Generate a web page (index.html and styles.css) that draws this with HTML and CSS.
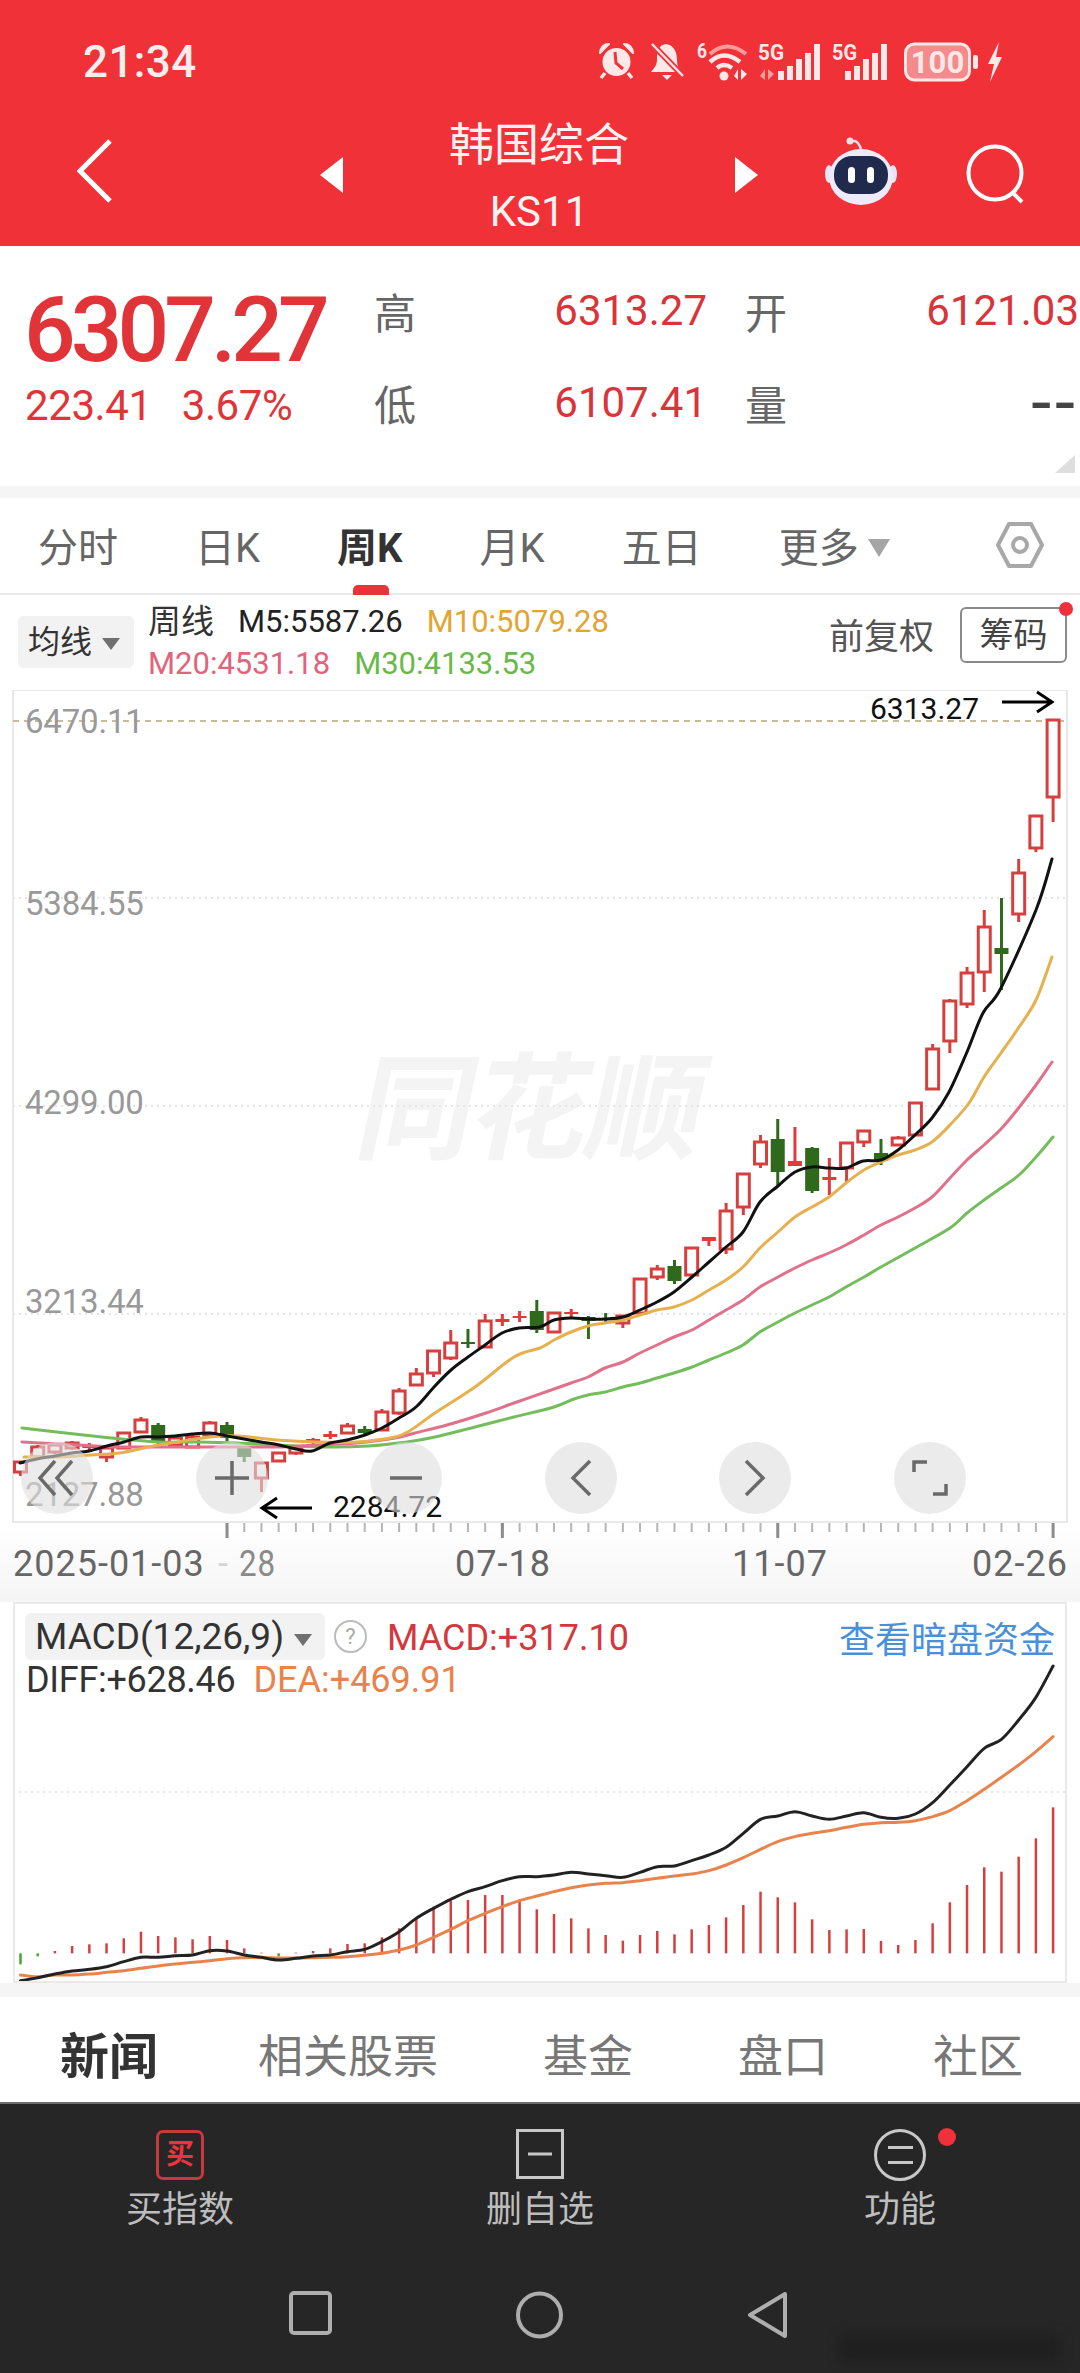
FILE: index.html
```html
<!DOCTYPE html>
<html lang="zh-CN">
<head>
    <meta charset="UTF-8">
    <meta name="viewport" content="width=device-width, initial-scale=1.0">
    <title>韩国综合 KS11</title>
    <link rel="stylesheet" href="styles.css">
</head>
<body>
<div class="top">
    <div class="status">
        <span class="time">21:34</span>
        <div class="status-icons">
            <svg class="ic-alarm" width="37" height="38" viewBox="0 0 37 38">
                <path d="M2 11 Q3 2 11 2 Z M35 11 Q34 2 26 2 Z" fill="#fde8e8" stroke="#fde8e8" stroke-width="2" stroke-linejoin="round"/>
                <circle cx="18.5" cy="20" r="14" fill="#fde8e8"/>
                <path d="M17 10 L18 21 L25 27" fill="none" stroke="#f1323a" stroke-width="3"/>
                <path d="M7 31 L3 36 M30 31 L34 36" stroke="#fde8e8" stroke-width="3.5"/>
            </svg>
            <svg class="ic-bell" width="35" height="39" viewBox="0 0 35 39">
                <path d="M16 2 C8 3 7 10 7 18 C7 24 3 27 1 30 L31 30 C29 27 27 24 27 18 C27 10 24 3 16 2 Z" fill="#fde8e8"/>
                <path d="M12 33 L22 33 L17 38 Z" fill="#fde8e8"/>
                <path d="M2 2 L33 34" stroke="#f1323a" stroke-width="6"/>
                <path d="M2 2 L33 34" stroke="#fde8e8" stroke-width="2.5"/>
            </svg>
            <svg class="ic-wifi ic-tall" width="53" height="50" viewBox="0 -10 53 50">
                <text class="ic-txt" x="0" y="16" font-size="21" textLength="10" lengthAdjust="spacingAndGlyphs">6</text>
                <path d="M13 12 Q30 -3 49 12" fill="none" stroke="#ff9a9a" stroke-width="4"/>
                <path d="M13 20 Q27 7 43 20" fill="none" stroke="#fde8e8" stroke-width="4.5"/>
                <path d="M20 26 Q27 20 35 26" fill="none" stroke="#fde8e8" stroke-width="4.5"/>
                <circle cx="27" cy="34" r="4.5" fill="#fde8e8"/>
                <path d="M41 38 L41 27 L37 34 Z M44 27 L44 38 L50 32 Z" fill="#fde8e8"/>
            </svg>
            <svg class="ic-sig ic-tall" width="64" height="50" viewBox="0 -10 64 50">
                <text class="ic-txt" x="0" y="18" font-size="22" textLength="26" lengthAdjust="spacingAndGlyphs">5G</text>
                <path d="M7 38 L7 27 L2 34 Z M10 27 L10 38 L16 32 Z" fill="#ff9a9a"/>
                <path d="M20 29h6v9h-6z M29 24h6v14h-6z M38 17h6v21h-6z M47 11h6v27h-6z M56 2h6v36h-6z" fill="#fde8e8"/>
            </svg>
            <svg class="ic-sig2 ic-tall" width="56" height="50" viewBox="0 -10 56 50">
                <text class="ic-txt" x="0" y="18" font-size="22" textLength="25" lengthAdjust="spacingAndGlyphs">5G</text>
                <path d="M13 29h6v9h-6z M22 24h6v14h-6z M31 17h6v21h-6z M40 11h6v27h-6z M49 2h6v36h-6z" fill="#fde8e8"/>
            </svg>
            <svg class="ic-batt" width="74" height="40" viewBox="0 0 74 40">
                <rect x="1.5" y="2" width="64" height="36" rx="9" fill="#f58a8c" stroke="#fde8e8" stroke-width="3"/>
                <text class="ic-txt" x="33.5" y="31" font-size="31" text-anchor="middle">100</text>
                <rect x="69" y="13" width="5" height="14" rx="2" fill="#fde8e8"/>
            </svg>
            <svg class="ic-bolt" width="15" height="40" viewBox="0 0 15 40">
                <path d="M12 0 L1 22 L7 22 L3 40 L15 15 L9 15 Z" fill="#fde8e8"/>
            </svg>
        </div>
    </div>
    <div class="nav">
        <svg class="back" width="35" height="64" viewBox="0 0 35 64"><path d="M33 2 L3 32 L33 62" fill="none" stroke="#fff" stroke-width="5"/></svg>
        <svg class="tri-l" width="23" height="36" viewBox="0 0 23 36"><path d="M23 0 L0 18 L23 36 Z" fill="#fff"/></svg>
        <div class="title">
            <div class="title-cn">韩国综合</div>
            <div class="title-code">KS11</div>
        </div>
        <svg class="tri-r" width="23" height="36" viewBox="0 0 23 36"><path d="M0 0 L23 18 L0 36 Z" fill="#fff"/></svg>
        <svg class="robot" width="72" height="68" viewBox="0 0 72 68">
            <path d="M26 5 Q32 1 36 12" fill="none" stroke="#f3dfe6" stroke-width="2.5"/>
            <circle cx="25" cy="4" r="3.5" fill="#f3dfe6"/>
            <ellipse cx="4" cy="37" rx="4" ry="9" fill="#e9e2f6"/>
            <ellipse cx="68" cy="37" rx="4" ry="9" fill="#e9e2f6"/>
            <ellipse cx="36" cy="40" rx="32" ry="28" fill="#efeafa"/>
            <rect x="9" y="19" width="54" height="38" rx="18" fill="#1f2a4d"/>
            <rect x="23" y="30" width="7" height="16" rx="3.5" fill="#fff"/>
            <rect x="42" y="30" width="7" height="16" rx="3.5" fill="#fff"/>
        </svg>
        <svg class="search" width="60" height="60" viewBox="0 0 60 60">
            <circle cx="29" cy="29" r="26.5" fill="none" stroke="#fff" stroke-width="4"/>
            <path d="M46 48 L56 58" stroke="#fff" stroke-width="4"/>
        </svg>
    </div>
</div>

<div class="quote">
    <div class="quote-main">
        <div class="price">6307.27</div>
        <div class="change"><span>223.41</span><span>3.67%</span></div>
    </div>
    <div class="quote-grid">
        <span class="q-label">高</span><span class="q-val">6313.27</span>
        <span class="q-label">开</span><span class="q-val">6121.03</span>
        <span class="q-label">低</span><span class="q-val">6107.41</span>
        <span class="q-label">量</span><span class="q-val q-none">--</span>
    </div>
    <svg class="corner" width="20" height="18" viewBox="0 0 20 18"><path d="M20 0 L20 18 L0 18 Z" fill="#dedede"/></svg>
</div>

<div class="band"></div>

<div class="tabs">
    <span class="tab">分时</span>
    <span class="tab">日K</span>
    <span class="tab tab-on">周K</span>
    <span class="tab">月K</span>
    <span class="tab">五日</span>
    <span class="tab">更多<i class="caret caret-big"></i></span>
    <svg class="hex" width="48" height="46" viewBox="0 0 48 46">
        <path d="M2 23 L13 2 L35 2 L46 23 L35 44 L13 44 Z" fill="none" stroke="#a8a8a8" stroke-width="4" stroke-linejoin="round"/>
        <circle cx="24" cy="23" r="7" fill="none" stroke="#a8a8a8" stroke-width="4"/>
    </svg>
</div>

<div class="legend">
    <div class="pill">均线<i class="caret"></i></div>
    <div class="legend-text">
        <div class="legend-row"><span class="lg-cn">周线</span><span class="c-ma5">M5:5587.26</span><span class="c-ma10">M10:5079.28</span></div>
        <div class="legend-row"><span class="c-ma20">M20:4531.18</span><span class="c-ma30">M30:4133.53</span></div>
    </div>
    <span class="adjust">前复权</span>
    <div class="chips">筹码<i class="dot"></i></div>
</div>

<div class="kline">
    <svg id="kline" class="plot" width="1080" height="912" viewBox="0 690 1080 912">
        <defs>
            <linearGradient id="axisFade" x1="0" y1="0" x2="0" y2="1">
                <stop offset="0" stop-color="#fff"/>
                <stop offset="1" stop-color="#f5f5f5"/>
            </linearGradient>
        </defs>
        <rect x="0" y="1523" width="1080" height="79" fill="url(#axisFade)"/>
        <rect x="13" y="690" width="1054" height="832" fill="#fff" stroke="#e9e9e9" stroke-width="2"/>
        <text class="wm" x="0" y="0" transform="translate(352 1150) skewX(-12)" textLength="345" font-size="116">同花顺</text>
        <path class="grid" d="M13 898H1067 M13 1106H1067 M13 1314H1067"/>
        <path class="grid-high" d="M13 721H1067"/>
        <text class="axis" x="25" y="733">6470.11</text>
        <text class="axis" x="25" y="915">5384.55</text>
        <text class="axis" x="25" y="1114">4299.00</text>
        <text class="axis" x="25" y="1313">3213.44</text>
        <text class="axis" x="25" y="1506">2127.88</text>
        <g id="candles"></g>
        <text class="mark" x="870" y="719">6313.27</text>
        <path class="arrow" d="M1002 702H1051 M1037 692L1052 702L1037 712"/>
        <text class="mark" x="333" y="1517">2284.72</text>
        <path class="arrow" d="M312 1508H263 M277 1498L262 1508L277 1518"/>
        <g id="ticks"></g>
        <text class="date" x="13" y="1576">2025-01-03</text>
        <text class="date date-ghost" x="218" y="1576">-</text>
        <text class="date date-soft" x="239" y="1576" textLength="37" lengthAdjust="spacingAndGlyphs">28</text>
        <text class="date" x="455" y="1576">07-18</text>
        <text class="date" x="732" y="1576">11-07</text>
        <text class="date" x="972" y="1576">02-26</text>
    </svg>
    <div class="zoom-btns">
        <div class="zoom-btn"><svg width="40" height="40" viewBox="0 0 40 40"><path d="M18 3L3 20L18 37 M35 3L20 20L35 37" fill="none" stroke="#6a6a6a" stroke-width="3.5"/></svg></div>
        <div class="zoom-btn"><svg width="40" height="40" viewBox="0 0 40 40"><path d="M3 20H37 M20 3V37" stroke="#6a6a6a" stroke-width="3.5"/></svg></div>
        <div class="zoom-btn"><svg width="40" height="40" viewBox="0 0 40 40"><path d="M4 20H36" stroke="#6a6a6a" stroke-width="3.5"/></svg></div>
        <div class="zoom-btn"><svg width="40" height="40" viewBox="0 0 40 40"><path d="M29 3L12 20L29 37" fill="none" stroke="#6a6a6a" stroke-width="3.5"/></svg></div>
        <div class="zoom-btn"><svg width="40" height="40" viewBox="0 0 40 40"><path d="M11 3L28 20L11 37" fill="none" stroke="#6a6a6a" stroke-width="3.5"/></svg></div>
        <div class="zoom-btn"><svg width="40" height="40" viewBox="0 0 40 40"><path d="M4 14V4H17 M36 26V36H23" fill="none" stroke="#6a6a6a" stroke-width="3.5"/></svg></div>
    </div>
</div>

<div class="macd">
    <div class="macd-head">
        <div class="macd-pill">MACD(12,26,9)<i class="caret"></i></div>
        <span class="help">?</span>
        <span class="macd-val">MACD:+317.10</span>
        <span class="macd-link">查看暗盘资金</span>
    </div>
    <div class="macd-sub"><span class="c-diff">DIFF:+628.46</span><span class="c-dea">DEA:+469.91</span></div>
    <svg id="macd" class="macd-plot" width="1054" height="378" viewBox="13 1603 1054 378">
        <path class="grid" d="M13 1792H1067"/>
    </svg>
</div>

<div class="band band-low"></div>

<div class="news-tabs">
    <span class="news-on">新闻</span>
    <span>相关股票</span>
    <span>基金</span>
    <span>盘口</span>
    <span>社区</span>
</div>

<div class="dock">
    <div class="actions">
        <div class="action">
            <div class="buy-ic">买</div>
            <div class="action-label">买指数</div>
        </div>
        <div class="action">
            <svg width="48" height="50" viewBox="0 0 48 50"><rect x="1.5" y="1.5" width="45" height="47" fill="none" stroke="#c8c8c8" stroke-width="3"/><path d="M12 25H36" stroke="#c8c8c8" stroke-width="3"/></svg>
            <div class="action-label">删自选</div>
        </div>
        <div class="action">
            <div class="func-ic">
                <svg width="52" height="52" viewBox="0 0 52 52"><circle cx="26" cy="26" r="24.5" fill="none" stroke="#c8c8c8" stroke-width="3"/><path d="M14 18.5H39 M14 33.5H39" stroke="#c8c8c8" stroke-width="3"/></svg>
                <i class="dot dot-func"></i>
            </div>
            <div class="action-label">功能</div>
        </div>
    </div>
    <div class="sys-nav">
        <svg width="43" height="44" viewBox="0 0 43 44"><rect x="2" y="2" width="39" height="40" rx="3" fill="none" stroke="#aeaeae" stroke-width="4"/></svg>
        <svg width="47" height="48" viewBox="0 0 47 48"><circle cx="23.5" cy="24" r="21.5" fill="none" stroke="#aeaeae" stroke-width="4"/></svg>
        <svg width="41" height="48" viewBox="0 0 41 48"><path d="M38 3 L3 24 L38 45 Z" fill="none" stroke="#aeaeae" stroke-width="4" stroke-linejoin="round"/></svg>
    </div>
    <div class="smudge"></div>
</div>
<script src="chart.js"></script>
</body>
</html>
```
FILE: styles.css
```css
* { box-sizing: border-box; }
html, body { margin: 0; padding: 0; }
body { width: 1080px; height: 2373px; overflow: hidden; background: #fff; font-family: Roboto, "Noto Sans CJK SC", sans-serif; color: #333; }
i { display: inline-block; font-style: normal; }

.top { height: 246px; background: #f13138; color: #fff; }
.status { height: 110px; display: flex; padding: 42px 78px 0 83px; justify-content: space-between; }
.time { font-size: 44px; font-weight: 500; letter-spacing: .4px; line-height: 40px; color: #fdeeee; }
.status-icons { display: flex; height: 40px; }
.status-icons svg { display: block; flex: none; }
.status-icons .ic-tall { margin-top: -10px; }
.ic-txt { font-family: Roboto, sans-serif; font-weight: 700; fill: #fde8e8; }
.ic-bell { margin-left: 15px; }
.ic-wifi { margin-left: 12px; }
.ic-sig { margin-left: 8px; }
.ic-sig2 { margin-left: 10px; }
.ic-batt { margin-left: 16px; }
.ic-bolt { margin-left: 9px; }

.nav { height: 136px; display: flex; align-items: center; padding-left: 77px; }
.nav svg { flex: none; display: block; }
.back { margin-top: -14px; }
.tri-l { margin: -6px 0 0 208px; }
.tri-r { margin-top: -6px; }
.title { width: 392px; text-align: center; padding-top: 2px; }
.title-cn { font-size: 45px; line-height: 66px; color: #fdf2f2; }
.title-code { font-size: 42px; line-height: 66px; letter-spacing: 0; color: #fdf2f2; }
.robot { margin: -14px 0 0 67px; }
.search { margin: -8px 0 0 69px; }

.quote { height: 240px; padding: 21px 0 0 24px; display: flex; position: relative; }
.quote-main { width: 350px; color: #e03438; }
.price { font-size: 91px; font-weight: 500; line-height: 86px; letter-spacing: -5px; margin-top: 20px; }
.change { font-size: 42px; line-height: 72px; letter-spacing: -.4px; margin: -3px 0 0 1px; display: flex; gap: 30px; }
.quote-grid { display: grid; grid-template-columns: 42px 291px 38px 42px 292px; grid-auto-rows: 92px; align-items: center; font-size: 42px; margin-top: -3px; height: 184px; }
.q-label { grid-column: auto; color: #666; }
.q-val { text-align: right; color: #d8343a; letter-spacing: 0; }
.q-label:nth-child(3), .q-label:nth-child(7) { grid-column: 4; }
.q-val.q-none { color: #444; font-size: 72px; line-height: 92px; letter-spacing: 4px; padding-top: 2px; }
.corner { position: absolute; left: 1055px; top: 209px; }

.band { height: 12px; background: #f5f5f5; }
.band-low { height: 14px; }

.tabs { height: 97px; display: flex; align-items: flex-start; gap: 77px; padding: 23px 0 0 38px; border-bottom: 2px solid #eaeaea; font-size: 40px; color: #666; position: relative; }
.tab { line-height: 56px; position: relative; white-space: nowrap; }
.tab-on { color: #333; font-weight: 700; }
.tab-on::after { content: ""; position: absolute; left: 16px; top: 64px; width: 36px; height: 10px; background: #e8343a; border-radius: 5px 5px 0 0; }
.caret { width: 0; height: 0; border-left: 9px solid transparent; border-right: 9px solid transparent; border-top: 12px solid #707070; margin-left: 10px; vertical-align: 3px; }
.caret-big { border-left-width: 11px; border-right-width: 11px; border-top: 18px solid #a5a5a5; margin-left: 9px; vertical-align: 5px; }
.hex { position: absolute; left: 996px; top: 24px; }

.legend { height: 95px; display: flex; align-items: flex-start; padding-left: 18px; }
.pill { width: 116px; height: 52px; margin-top: 21px; background: #f2f2f2; border-radius: 6px; font-size: 32px; line-height: 52px; padding-left: 10px; color: #333; white-space: nowrap; }
.legend-text { margin: 6px 0 0 14px; font-size: 31px; line-height: 42px; }
.legend-row { display: flex; gap: 24px; white-space: nowrap; }
.lg-cn { font-size: 33px; }
.c-ma5 { color: #222; }
.c-ma10 { color: #e3a531; }
.c-ma20 { color: #e2637c; }
.c-ma30 { color: #68b948; }
.adjust { margin: 18px 0 0 auto; font-size: 35px; line-height: 50px; color: #555; }
.chips { width: 107px; height: 56px; margin: 12px 13px 0 26px; border: 2px solid #8a8a8a; border-radius: 6px; font-size: 34px; line-height: 52px; text-align: center; color: #444; position: relative; }
.dot { position: absolute; width: 14px; height: 14px; border-radius: 50%; background: #f0303a; right: -8px; top: -7px; }

.kline { height: 912px; position: relative; }
.plot { display: block; }
.grid { fill: none; stroke: #e6e6e6; stroke-width: 2; stroke-dasharray: 2 4; }
.grid-high { fill: none; stroke: #c9bb9a; stroke-width: 2; stroke-dasharray: 6 5; }
.axis { font-size: 33px; fill: #999; letter-spacing: -.2px; }
.mark { font-size: 30px; fill: #111; }
.arrow { fill: none; stroke: #000; stroke-width: 3; }
.date { font-size: 36px; fill: #666; letter-spacing: 1px; }
.date-ghost { fill: #d5d5d5; }
.date-soft { fill: #8a8a8a; }
.wm { fill: #f4f4f4; font-family: "Noto Sans CJK SC", sans-serif; font-weight: 700; }
.zoom-btns { position: absolute; left: 21px; top: 752px; display: flex; gap: 102.5px; }
.zoom-btn { width: 72px; height: 72px; border-radius: 50%; background: rgba(222,222,222,.6); display: flex; align-items: center; justify-content: center; }
.zoom-btn svg { display: block; }

.macd { height: 381px; margin: 0 13px; border: 2px solid #e9e9e9; position: relative; }
.macd-head { display: flex; align-items: center; height: 47px; margin-top: 9px; padding-left: 10px; }
.macd-pill { width: 300px; height: 47px; background: #f2f2f2; border-radius: 6px; font-size: 37px; line-height: 47px; padding-left: 10px; color: #333; white-space: nowrap; }
.help { width: 33px; height: 33px; margin-left: 9px; border: 2px solid #bbb; border-radius: 50%; font-size: 22px; line-height: 29px; text-align: center; color: #aaa; }
.macd-val { margin-left: 20px; font-size: 36px; color: #d3383d; padding-top: 2px; }
.macd-link { margin-left: auto; margin-right: 10px; font-size: 36px; color: #4a90d9; }
.macd-sub { display: flex; gap: 18px; padding-left: 11px; margin-top: -2px; font-size: 36px; line-height: 44px; }
.c-diff { color: #333; letter-spacing: -.3px; }
.c-dea { color: #e8834c; }
.macd-plot { position: absolute; left: -2px; top: -1px; display: block; }

.news-tabs { height: 105px; display: flex; padding: 31px 0 0 60px; font-size: 45px; line-height: 60px; color: #777; white-space: nowrap; }
.news-tabs span { margin-right: 105px; }
.news-tabs .news-on { font-size: 49px; font-weight: 700; color: #333; margin-right: 100px; }

.dock { height: 273px; background: #262626; border-top: 2px solid #6e6e6e; position: relative; }
.actions { display: flex; padding-top: 25px; }
.action { width: 360px; display: flex; flex-direction: column; align-items: center; }
.action > svg, .func-ic svg { display: block; }
.buy-ic { width: 48px; height: 50px; border: 3px solid #c8383c; border-radius: 7px; color: #ee333c; font-size: 28px; font-weight: 700; line-height: 44px; text-align: center; margin-top: 1px; }
.func-ic { position: relative; width: 52px; height: 50px; }
.dot-func { width: 18px; height: 18px; right: -30px; top: -1px; }
.action-label { margin-top: 8px; font-size: 36px; line-height: 46px; color: #bdbdbd; white-space: nowrap; }
.action:first-child .action-label { margin-top: 7px; }
.sys-nav { display: flex; justify-content: center; gap: 184px; margin-top: 58px; padding-right: 3px; }
.sys-nav svg { display: block; }
.smudge { position: absolute; left: 840px; top: 232px; width: 220px; height: 26px; background: #1f1f1f; filter: blur(6px); }
```
FILE: chart.js
```js
// weekly candles, left to right, in page pixels: [top, bottom, high, low, type]
// type: r hollow red, f filled red, g green
const bars = [
    [1462,1472,1462,1476,'r'],[1447,1457,1445,1459,'r'],[1445,1452,1444,1454,'r'],[1443,1448,1441,1450,'r'],
    [1445,1448,1443,1451,'f'],[1448,1457,1448,1462,'r'],[1433,1448,1432,1449,'r'],[1420,1432,1417,1433,'r'],
    [1425,1443,1423,1445,'g'],[1438,1445,1436,1447,'r'],[1437,1447,1433,1448,'r'],[1423,1435,1421,1437,'r'],
    [1425,1438,1422,1441,'g'],[1448,1457,1446,1462,'g'],[1463,1478,1462,1492,'r'],[1453,1461,1452,1462,'r'],
    [1448,1453,1447,1455,'r'],[1439,1443,1438,1445,'f'],[1434,1437,1431,1439,'f'],[1426,1433,1423,1434,'r'],
    [1429,1433,1426,1435,'g'],[1412,1430,1409,1431,'r'],[1391,1413,1388,1415,'r'],[1374,1385,1368,1386,'r'],
    [1351,1373,1350,1377,'r'],[1343,1358,1330,1360,'r'],[1342,1344,1329,1348,'g'],[1321,1347,1314,1348,'r'],
    [1319,1322,1314,1326,'f'],[1316,1318,1311,1322,'f'],[1311,1330,1300,1333,'g'],[1313,1332,1312,1333,'r'],
    [1312,1314,1309,1318,'f'],[1317,1321,1316,1339,'g'],[1318,1320,1313,1323,'g'],[1316,1323,1315,1328,'r'],
    [1279,1313,1278,1315,'r'],[1269,1277,1265,1280,'r'],[1266,1281,1260,1284,'g'],[1248,1275,1247,1277,'r'],
    [1237,1241,1237,1246,'f'],[1211,1249,1203,1254,'r'],[1174,1207,1173,1215,'r'],[1142,1164,1135,1168,'r'],
    [1139,1172,1119,1185,'g'],[1161,1166,1127,1166,'f'],[1148,1191,1147,1193,'g'],[1177,1180,1158,1195,'f'],
    [1143,1168,1143,1183,'r'],[1131,1142,1131,1147,'r'],[1153,1161,1139,1165,'g'],[1138,1145,1136,1146,'r'],
    [1103,1135,1103,1135,'r'],[1049,1089,1044,1089,'r'],[1001,1041,999,1053,'r'],[973,1004,967,1008,'r'],
    [927,972,910,992,'r'],[948,954,898,990,'g'],[873,914,859,922,'r'],[816,848,816,852,'r'],[720,797,720,822,'r']
];

const ma5 = [[20,1463],[37,1459],[55,1456],[72,1453],[89,1451],[107,1446],[124,1442],[141,1437],[158,1437],[175,1436],[192,1434],[210,1433],[227,1436],[244,1439],[261,1442],[279,1445],[296,1449],[312,1451],[330,1443],[347,1440],[365,1435],[382,1428],[399,1418],[416,1407],[434,1387],[451,1370],[468,1357],[485,1345],[502,1333],[519,1328],[540,1327],[554,1320],[571,1318],[588,1319],[605,1319],[623,1317],[640,1310],[657,1302],[674,1292],[692,1277],[709,1262],[726,1247],[743,1232],[760,1202],[778,1186],[795,1172],[812,1167],[829,1168],[846,1168],[863,1161],[881,1160],[898,1150],[915,1135],[932,1118],[949,1092],[967,1052],[983,1013],[1001,988],[1036,910],[1052,859]];
const ma10 = [[24,1457],[59,1457],[91,1455],[119,1453],[158,1445],[178,1442],[210,1437],[237,1436],[277,1440],[316,1442],[356,1442],[395,1437],[411,1430],[435,1413],[475,1387],[514,1357],[540,1348],[554,1340],[571,1332],[588,1326],[605,1323],[623,1320],[640,1315],[657,1310],[674,1307],[692,1300],[709,1290],[726,1280],[743,1267],[760,1248],[778,1232],[795,1217],[812,1207],[829,1197],[846,1183],[864,1170],[881,1162],[898,1155],[915,1150],[932,1142],[950,1125],[969,1103],[984,1077],[1001,1053],[1017,1030],[1036,1000],[1052,957]];
const ma20 = [[22,1442],[40,1443],[79,1445],[119,1447],[158,1447],[198,1447],[237,1447],[277,1447],[316,1445],[356,1443],[395,1438],[415,1433],[447,1425],[486,1413],[514,1403],[554,1389],[571,1383],[588,1377],[605,1368],[623,1362],[640,1353],[657,1345],[674,1337],[692,1330],[709,1320],[726,1310],[743,1300],[760,1287],[778,1277],[795,1268],[812,1260],[829,1253],[846,1245],[864,1235],[881,1225],[898,1217],[915,1208],[932,1197],[950,1178],[967,1160],[984,1145],[1001,1129],[1017,1110],[1036,1085],[1052,1062]];
const ma30 = [[22,1428],[111,1438],[158,1442],[198,1442],[237,1443],[277,1445],[328,1447],[368,1446],[407,1442],[435,1437],[475,1427],[514,1417],[554,1407],[574,1399],[588,1395],[605,1392],[623,1387],[640,1383],[657,1378],[674,1373],[692,1367],[709,1360],[726,1353],[743,1345],[760,1332],[778,1322],[795,1313],[812,1305],[829,1297],[846,1287],[864,1277],[881,1267],[915,1248],[950,1228],[967,1213],[984,1200],[1001,1188],[1019,1175],[1036,1157],[1053,1137]];

// macd panel values, top of each bar and line points, read off 1590 + v/3
const hist = [1090,1090,1083,1068,1063,1060,1045,1025,1038,1042,1048,1038,1050,1075,1088,1090,1088,1083,1075,1062,1060,1042,1015,985,950,932,930,915,915,928,958,972,985,1015,1035,1052,1035,1023,1033,1018,1005,982,945,905,922,937,988,1020,1018,1017,1053,1065,1050,1000,937,885,832,845,800,745,652];
const diff = [1172,1163,1152,1143,1138,1130,1115,1102,1102,1097,1095,1082,1083,1095,1102,1110,1105,1098,1095,1085,1078,1055,1025,985,955,928,905,890,872,860,860,855,847,852,857,862,847,830,828,812,795,772,730,688,678,665,678,688,678,668,682,685,672,638,585,530,475,448,390,322,228];
const dea = [1155,1160,1155,1155,1152,1147,1142,1135,1128,1122,1117,1112,1106,1103,1103,1104,1104,1103,1102,1100,1096,1090,1080,1065,1042,1018,992,970,950,932,918,905,893,885,880,878,872,865,858,852,842,825,803,778,755,740,730,722,712,703,698,697,692,680,662,632,598,562,525,485,440];

const NS = 'http://www.w3.org/2000/svg';
const barX = i => 20.5 + i * 17.21;

function add(parent, tag, attrs) {
    const el = document.createElementNS(NS, tag);
    for (const k in attrs) el.setAttribute(k, attrs[k]);
    parent.appendChild(el);
    return el;
}

// catmull-rom through the points so the averages don't look kinked
function smooth(pts) {
    let d = `M${pts[0][0]} ${pts[0][1]}`;
    for (let i = 0; i < pts.length - 1; i++) {
        const a = pts[i - 1] || pts[i], b = pts[i], c = pts[i + 1], e = pts[i + 2] || c;
        const c1x = b[0] + (c[0] - a[0]) / 6, c1y = b[1] + (c[1] - a[1]) / 6;
        const c2x = c[0] - (e[0] - b[0]) / 6, c2y = c[1] - (e[1] - b[1]) / 6;
        d += `C${c1x.toFixed(1)} ${c1y.toFixed(1)} ${c2x.toFixed(1)} ${c2y.toFixed(1)} ${c[0]} ${c[1]}`;
    }
    return d;
}

function line(parent, pts, color, width) {
    add(parent, 'path', {
        d: smooth(pts), fill: 'none', stroke: color, 'stroke-width': width, 'stroke-linecap': 'round'
    });
}

const candles = document.getElementById('candles');
bars.forEach((b, i) => {
    const x = barX(i);
    const color = b[4] === 'g' ? '#2f6a1c' : (b[4] === 'f' ? '#e5383c' : '#d5403f');
    add(candles, 'path', { d: `M${x} ${b[2]}V${b[3]}`, stroke: color, 'stroke-width': 3 });
    if (b[4] === 'r') {
        add(candles, 'rect', { x: x - 6, y: b[0], width: 12, height: b[1] - b[0], fill: '#fff', stroke: color, 'stroke-width': 3 });
    } else {
        add(candles, 'rect', { x: x - 7, y: b[0], width: 14, height: b[1] - b[0], fill: color });
    }
});
line(candles, ma30, '#74bd5c', 3);
line(candles, ma20, '#e0718a', 3);
line(candles, ma10, '#e6b04e', 3);
line(candles, ma5, '#111', 3);

const ticks = document.getElementById('ticks');
for (let i = 12; i <= 60; i++) {
    const long = (i - 12) % 16 === 0;
    add(ticks, 'path', {
        d: `M${barX(i)} 1523V${long ? 1538 : 1532}`,
        stroke: long ? '#8c8c8c' : '#b5b5b5', 'stroke-width': long ? 3 : 2
    });
}

const macd = document.getElementById('macd');
const my = v => 1590 + v / 3;
const zero = my(1090);
hist.forEach((v, i) => {
    const x = barX(i);
    if (i === 0) add(macd, 'path', { d: `M${x} ${zero}V${zero + 11}`, stroke: '#4aa52e', 'stroke-width': 2.5 });
    else if (i === 1 || i === 15) add(macd, 'path', { d: `M${x} ${zero}V${zero + 3}`, stroke: '#4aa52e', 'stroke-width': 2.5 });
    else add(macd, 'path', { d: `M${x} ${my(v)}V${zero}`, stroke: '#d5403f', 'stroke-width': 2.5 });
});
line(macd, dea.map((v, i) => [barX(i), my(v)]), '#e8834c', 3);
line(macd, diff.map((v, i) => [barX(i), my(v)]), '#222', 3);
```
